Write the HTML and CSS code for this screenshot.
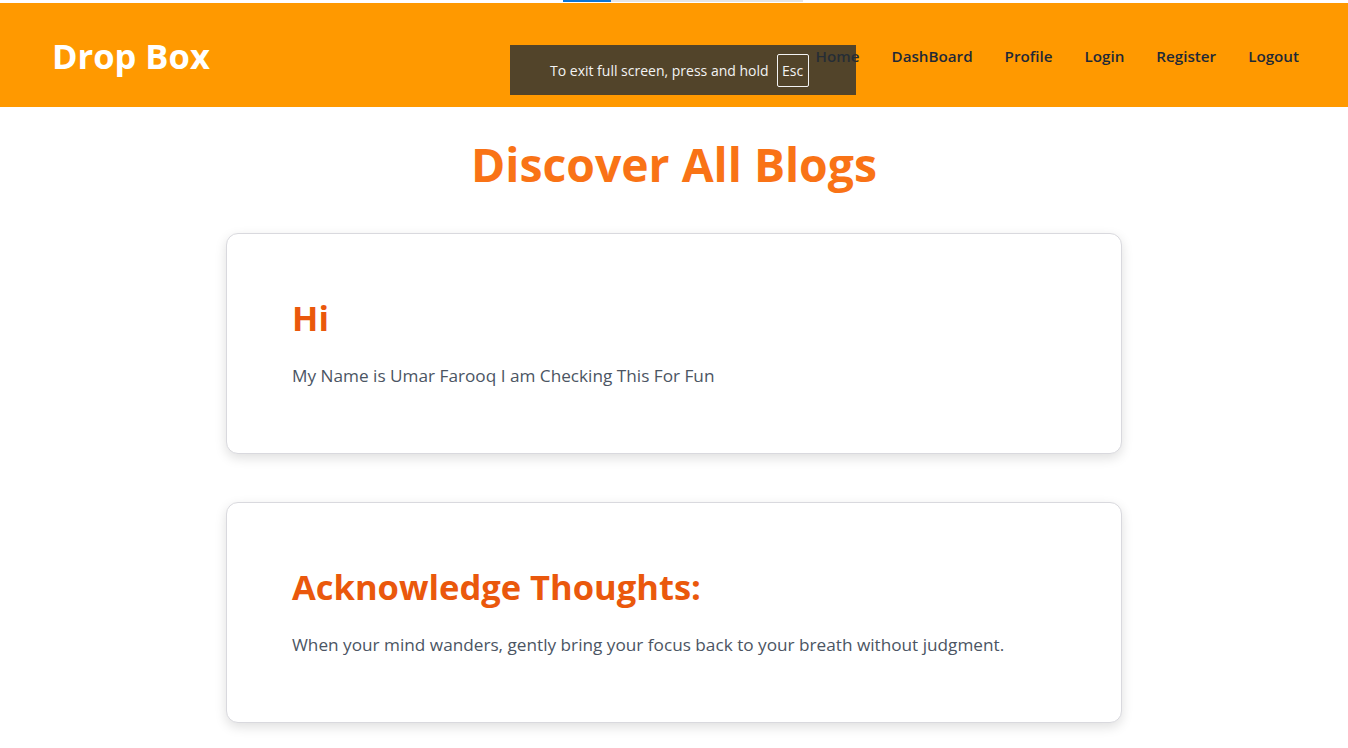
FILE: index.html
```html
<!DOCTYPE html>
<html lang="en">
<head>
<meta charset="utf-8">
<title>Drop Box</title>
<link rel="stylesheet" href="styles.css">
</head>
<body>
<div class="topstrip"><span class="strip-blue"></span><span class="strip-gray"></span></div>
<header class="navbar">
  <div class="brand">Drop Box</div>
  <nav class="nav">
    <a href="#">Home</a>
    <a href="#">DashBoard</a>
    <a href="#">Profile</a>
    <a href="#">Login</a>
    <a href="#">Register</a>
    <a href="#">Logout</a>
  </nav>
  <div class="fs-toast">To exit full screen, press and hold <span class="key">Esc</span></div>
</header>
<main class="main">
  <h1 class="page-title">Discover All Blogs</h1>
  <section class="list">
    <article class="card">
      <h2 class="card-title">Hi</h2>
      <p class="card-text">My Name is Umar Farooq I am Checking This For Fun</p>
    </article>
    <article class="card">
      <h2 class="card-title">Acknowledge Thoughts:</h2>
      <p class="card-text">When your mind wanders, gently bring your focus back to your breath without judgment.</p>
    </article>
  </section>
</main>
</body>
</html>
```

FILE: styles.css
```css
* { box-sizing: border-box; }
html, body { margin: 0; padding: 0; }
body {
  font-family: "Open Sans", "Noto Sans", sans-serif;
  background: #fff;
  color: #1f2937;
}
.topstrip {
  height: 3px;
  display: flex;
  padding-left: 563px;
  background: #fff;
}
.strip-blue { width: 48px; height: 2px; background: #0a74d6; }
.strip-gray { width: 192px; height: 2px; background: #e5e5e5; }
.navbar {
  position: relative;
  height: 104px;
  background: #ff9900;
  display: flex;
  align-items: center;
  justify-content: space-between;
  padding: 0 49px 0 52px;
}
.brand {
  color: #fff;
  font-weight: 700;
  font-size: 34.5px;
  line-height: 44px;
  padding-top: 2px;
}
.nav {
  display: flex;
  gap: 32px;
  padding-top: 2px;
}
.nav a {
  color: #1f2937;
  text-decoration: none;
  font-weight: 600;
  font-size: 15.2px;
  line-height: 24px;
}
.fs-toast {
  position: absolute;
  left: 510px;
  top: 42px;
  width: 346px;
  height: 50px;
  background: rgba(39, 46, 53, 0.8);
  color: #f3f3f3;
  font-size: 14px;
  display: flex;
  align-items: center;
  justify-content: flex-start;
  gap: 8px;
  padding-left: 40px;
}
.key {
  width: 32px;
  height: 33px;
  border: 1px solid #f3f3f3;
  border-radius: 2px;
  display: flex;
  align-items: center;
  justify-content: center;
}
.main {
  padding: 26px 0 40px;
}
.page-title {
  margin: 0 0 36px;
  text-align: center;
  color: #f97316;
  font-size: 46.3px;
  font-weight: 700;
  line-height: 64px;
}
.list {
  width: 896px;
  margin: 0 auto;
  display: flex;
  flex-direction: column;
  gap: 48px;
}
.card {
  border: 1px solid #d9d9de;
  border-radius: 12px;
  background: #fff;
  box-shadow: 0 4px 12px rgba(0,0,0,0.13);
  padding: 64px 64px 63px 65px;
}
.card-title {
  margin: 0 0 24px;
  color: #ea580c;
  font-size: 34.5px;
  font-weight: 700;
  line-height: 40px;
}
.card-text {
  margin: 0;
  color: #4b5563;
  font-size: 17.2px;
  line-height: 28px;
}
```
